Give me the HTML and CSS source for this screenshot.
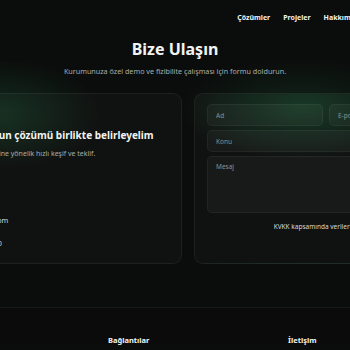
FILE: index.html
```html
<!DOCTYPE html>
<html lang="tr">
    <head>
        <meta charset="UTF-8" />
        <meta name="viewport" content="width=device-width, initial-scale=1.0" />
        <title>Bize Ulaşın</title>

        <link rel="stylesheet" href="styles.css">
    </head>
    <body>
        <header class="site-header">
            <div class="wrap header-inner">
                <a class="logo" href="#">Vizyon</a>
                <nav class="nav">
                    <a href="#">Çözümler</a>
                    <a href="#">Projeler</a>
                    <a href="#">Hakkımızda</a>
                    <a href="#">Blog</a>
                    <a href="#">İletişim</a>
                </nav>
            </div>
        </header>

        <section class="contact">
            <h1 class="title">Bize Ulaşın</h1>
            <p class="lead">Kurumunuza özel demo ve fizibilite çalışması için formu doldurun.</p>

            <div class="wrap contact-grid">
                <div class="card info">
                    <h2>Sorununuzun çözümü birlikte belirleyelim</h2>
                    <p class="muted">İşletme hedeflerine yönelik hızlı keşif ve teklif.</p>
                    <ul class="info-list">
                        <li>İstanbul</li>
                        <li>info@vizyonai.com</li>
                        <li>+90 212 00 00 00</li>
                    </ul>
                </div>

                <form class="card form">
                    <div class="row">
                        <input type="text" placeholder="Ad" />
                        <input type="email" placeholder="E-posta" />
                    </div>
                    <input type="text" placeholder="Konu" />
                    <textarea placeholder="Mesaj"></textarea>
                    <div class="form-foot">
                        <span class="note">KVKK kapsamında verileriniz korunur.</span>
                        <button type="submit">Gönder</button>
                    </div>
                </form>
            </div>
        </section>

        <footer class="site-footer">
            <div class="wrap footer-grid">
                <div><h4>Vizyon</h4></div>
                <div><h4>Bağlantılar</h4></div>
                <div><h4>İletişim</h4></div>
            </div>
        </footer>
    </body>
</html>
```

FILE: styles.css
```css
body {
    margin: 0;
    background: #0b0d0c;
    color: #f1f4f2;
    font-family: 'Noto Sans', 'Open Sans', sans-serif;
    overflow: hidden;
}
a {
    color: inherit;
    text-decoration: none;
}

.wrap {
    width: 558px;
    margin-left: -104px;
    box-sizing: border-box;
}

.site-header {
    height: 34px;
}
.header-inner {
    height: 100%;
    display: flex;
    align-items: center;
    justify-content: space-between;
}
.logo {
    font-weight: 700;
    font-size: 10px;
}
.nav {
    display: flex;
    gap: 13px;
    margin-right: 21px;
    font-size: 7px;
    font-weight: 700;
}

.contact {
    padding: 3px 0 43px;
    background:
        radial-gradient(ellipse 100px 55px at 0 80px, rgba(34, 110, 66, 0.32), transparent),
        radial-gradient(ellipse 120px 50px at 300px 75px, rgba(34, 110, 66, 0.24), transparent);
}
.title {
    margin: 0;
    text-align: center;
    font-size: 16px;
    line-height: 24px;
}
.lead {
    margin: 5px 0 17px;
    text-align: center;
    font-size: 7.2px;
    color: #a7aeab;
}

.contact-grid {
    display: grid;
    grid-template-columns: 286px 260px;
    gap: 12px;
}
.card {
    background: rgba(255, 255, 255, 0.025);
    border: 1px solid rgba(255, 255, 255, 0.06);
    border-radius: 9px;
    height: 171px;
    box-sizing: border-box;
}

.info {
    padding: 35px 20px 20px 48px;
    white-space: nowrap;
}
.info h2 {
    margin: 0;
    font-size: 10px;
    line-height: 13px;
}
.muted {
    margin: 7px 0 0;
    font-size: 7px;
    color: #a7aeab;
}
.info-list {
    list-style: none;
    margin: 28px 0 0;
    padding: 0;
    font-size: 7.2px;
    color: #d2d6d4;
}
.info-list li {
    height: 23px;
    line-height: 23px;
}

.form {
    display: flex;
    flex-direction: column;
    gap: 4px;
    padding: 10px 12px;
    background:
        radial-gradient(ellipse 130px 55px at 110px 10px, rgba(34, 110, 66, 0.22), transparent),
        rgba(255, 255, 255, 0.025);
}
.row {
    display: grid;
    grid-template-columns: 1fr 1fr;
    gap: 6px;
}
.form input,
.form textarea {
    font-family: inherit;
    font-size: 6.5px;
    color: #e6e9e8;
    background: rgba(255, 255, 255, 0.035);
    border: 1px solid rgba(255, 255, 255, 0.05);
    border-radius: 5px;
    outline: none;
    padding: 0 8px;
    box-sizing: border-box;
}
.form input {
    height: 22px;
}
.form textarea {
    height: 57px;
    padding-top: 5px;
    resize: none;
}
::placeholder {
    color: #8b928f;
}
.form-foot {
    display: flex;
    align-items: center;
    justify-content: flex-end;
    gap: 0;
    margin-top: 0;
}
.note {
    font-size: 6.5px;
    color: #d6dad8;
}
.form-foot button {
    font-family: inherit;
    font-size: 7px;
    font-weight: 700;
    padding: 5px 14px;
    border: none;
    border-radius: 5px;
    background: #1f8a4c;
    color: white;
}

.site-footer {
    border-top: 1px solid rgba(255, 255, 255, 0.06);
    background: #0b0b0b;
    padding-top: 27px;
}
.footer-grid {
    display: grid;
    grid-template-columns: 212px 180px auto;
}
.footer-grid h4 {
    margin: 0;
    font-size: 7.5px;
}
```
